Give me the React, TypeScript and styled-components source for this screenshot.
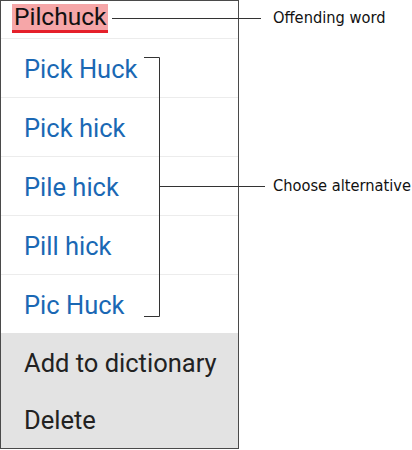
import styled, { createGlobalStyle } from "styled-components";

const GlobalStyle = createGlobalStyle`
  html, body {
    margin: 0;
    padding: 0;
    background: #ffffff;
    overflow: hidden;
  }
`;

const Page = styled.div`
  position: relative;
  width: 412px;
  height: 450px;
  background: #fff;
`;

const Menu = styled.div`
  width: 237px;
  height: 447px;
  border: 1px solid #4a4a4a;
  display: flex;
  flex-direction: column;
  font-family: Roboto, "Noto Sans", sans-serif;
`;

const Header = styled.div`
  height: 40px;
  padding-left: 11px;
  display: flex;
  align-items: flex-start;
  padding-top: 3px;
  box-sizing: border-box;
  border-bottom: 1px solid #ececec;
`;

const Misspelled = styled.span`
  font-size: 24.5px;
  line-height: 26px;
  color: #111;
  background: #f6a6a8;
  padding: 0 2px;
  border-bottom: 3px solid #e5202a;
`;

const Item = styled.div<{ $muted?: boolean; $divider?: boolean }>`
  flex: 0 0 auto;
  height: ${(p) => (p.$muted ? "57.5px" : p.$divider ? "59px" : "58px")};
  display: flex;
  align-items: center;
  padding-left: 23px;
  padding-top: 2px;
  box-sizing: border-box;
  font-size: 25.5px;
  color: ${(p) => (p.$muted ? "#222" : "#1a68b4")};
  background: ${(p) => (p.$muted ? "#e3e3e3" : "#fff")};
  border-bottom: ${(p) => (p.$divider ? "1px solid #ececec" : "none")};
`;

const Leaders = styled.svg`
  position: absolute;
  left: 0;
  top: 0;
  pointer-events: none;
`;

const Callout = styled.div<{ $top: number }>`
  position: absolute;
  left: 273px;
  top: ${(p) => p.$top}px;
  font-family: "DejaVu Sans Condensed", "DejaVu Sans", sans-serif;
  font-size: 16.3px;
  line-height: 18px;
  color: #111;
  white-space: nowrap;
`;

const suggestions = ["Pick Huck", "Pick hick", "Pile hick", "Pill hick", "Pic Huck"];

export default function App() {
  return (
    <Page>
      <GlobalStyle />
      <Menu>
        <Header>
          <Misspelled>Pilchuck</Misspelled>
        </Header>
        {suggestions.map((s, i) => (
          <Item key={s} $divider={i < suggestions.length - 1}>
            {s}
          </Item>
        ))}
        <Item $muted>Add to dictionary</Item>
        <Item $muted>Delete</Item>
      </Menu>
      <Leaders width="412" height="450" viewBox="0 0 412 450">
        <g stroke="#333" strokeWidth="1" fill="none">
          <path d="M112 18.5 H261" />
          <path d="M144 57.5 H159.5 V316.5 H144" />
          <path d="M159.5 186.5 H265" />
        </g>
      </Leaders>
      <Callout $top={9}>Offending word</Callout>
      <Callout $top={177}>Choose alternative</Callout>
    </Page>
  );
}
